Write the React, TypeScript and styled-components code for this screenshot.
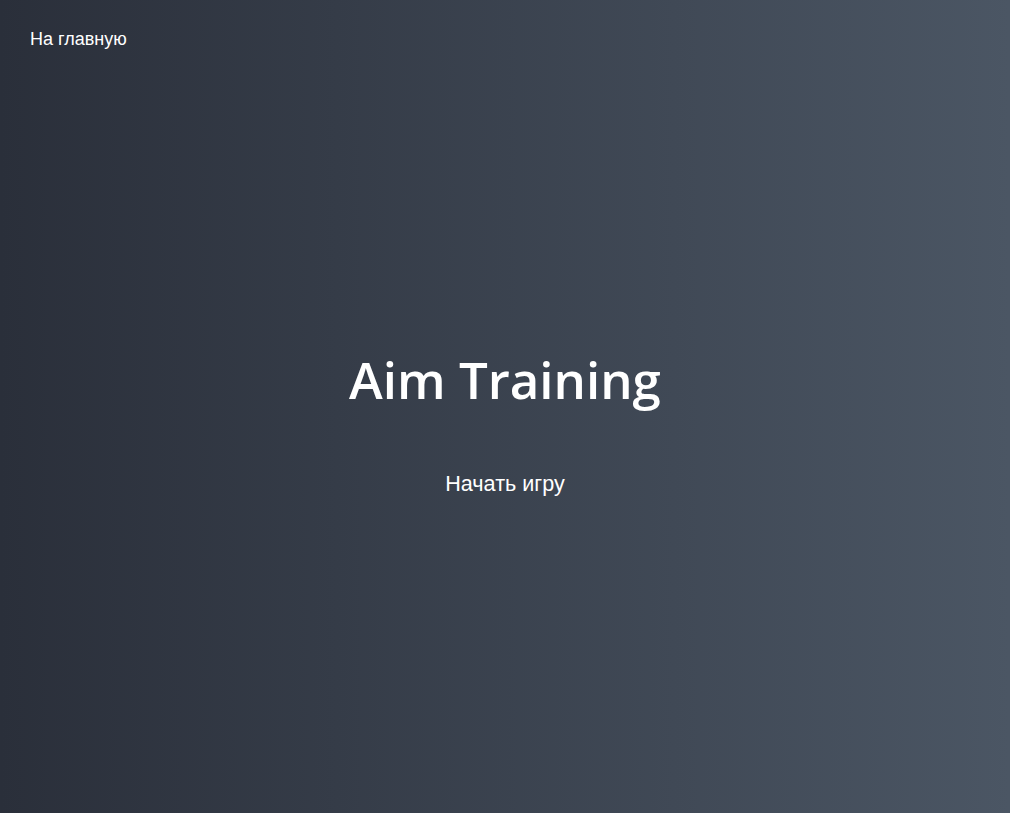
import React from "react";
import styled, { createGlobalStyle } from "styled-components";

const GlobalStyle = createGlobalStyle`
  html, body { margin: 0; padding: 0; }
  body { font-family: "Liberation Sans", Arial, sans-serif; }
`;

const Page = styled.div`
  position: relative;
  width: 100%;
  height: 100vh;
  background: linear-gradient(to right, #2a2f3a, #4b5664);
  color: #ffffff;
  display: flex;
  flex-direction: column;
`;

const TopBar = styled.nav`
  padding: 29px 30px 0;
`;

const HomeLink = styled.a`
  font-family: "Liberation Sans", Arial, sans-serif;
  font-size: 18px;
  color: #ffffff;
  text-decoration: none;
  cursor: pointer;
`;

const Center = styled.main`
  flex: 1;
  display: flex;
  flex-direction: column;
  align-items: center;
  justify-content: center;
  padding-bottom: 13px;
`;

const Title = styled.h1`
  margin: 0;
  font-family: "Open Sans", sans-serif;
  font-weight: 600;
  font-size: 51px;
  line-height: 1.2;
`;

const StartButton = styled.button`
  margin-top: 57px;
  background: transparent;
  border: none;
  color: #ffffff;
  font-family: "Liberation Sans", Arial, sans-serif;
  font-size: 21.6px;
  cursor: pointer;
  padding: 4px 8px;
`;

export default function App() {
  return (
    <>
      <GlobalStyle />
      <Page>
        <TopBar>
          <HomeLink>На главную</HomeLink>
        </TopBar>
        <Center>
          <Title>Aim Training</Title>
          <StartButton>Начать игру</StartButton>
        </Center>
      </Page>
    </>
  );
}
